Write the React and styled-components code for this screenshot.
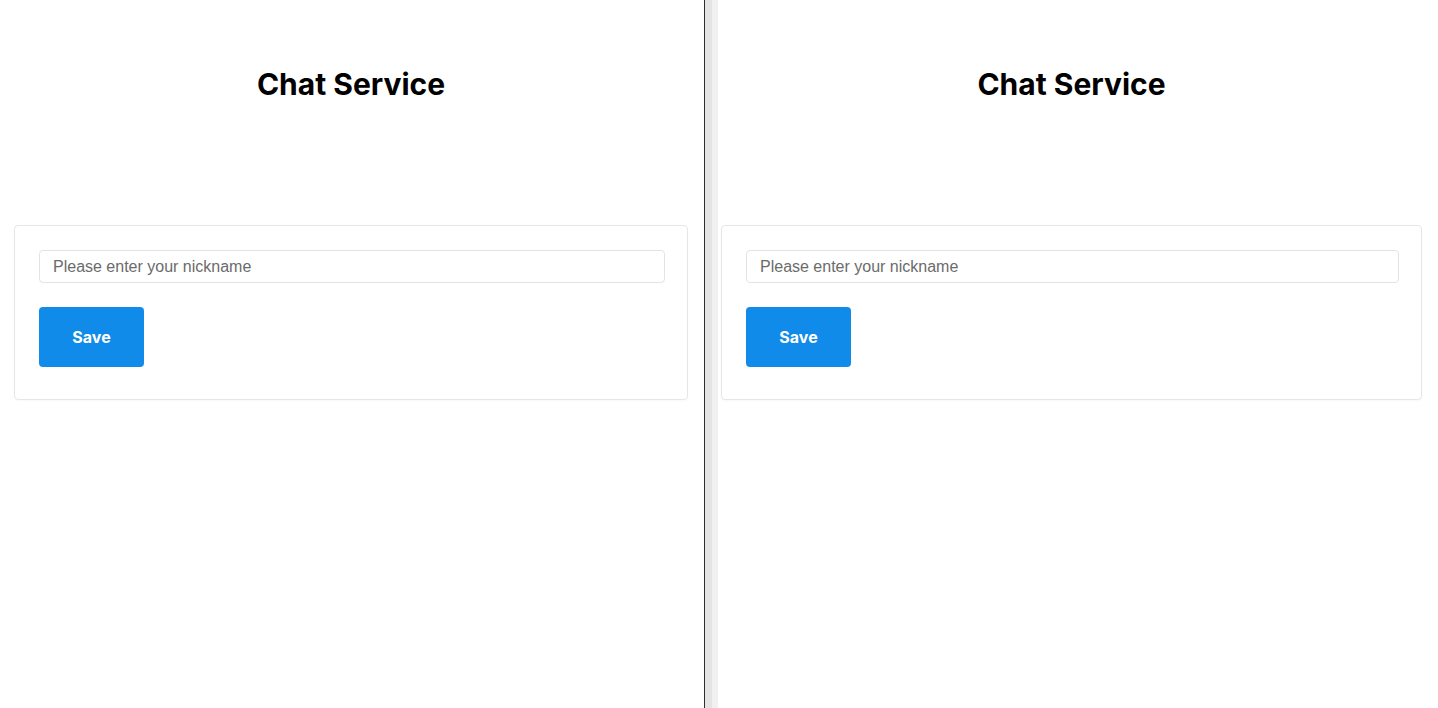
import React, { useState } from "react";
import styled, { createGlobalStyle } from "styled-components";

const GlobalStyle = createGlobalStyle`
  html, body {
    margin: 0;
    padding: 0;
    background: #ffffff;
  }
  body {
    font-family: Inter, "Liberation Sans", sans-serif;
  }
`;

const StScreen = styled.div`
  display: flex;
  width: 1438px;
  height: 708px;
  overflow: hidden;
`;

const StPane = styled.div`
  position: relative;
  display: flex;
  flex-direction: column;
  box-sizing: border-box;
  width: ${(props) => props.width}px;
  padding: 66px 16px 0 ${(props) => props.left}px;
  background: #ffffff;
`;

const StDivider = styled.div`
  width: 1px;
  background: #2f2f2f;
`;

// window edge of the second browser laid over the pane
const StEdge = styled.div`
  position: absolute;
  top: 0;
  left: 0;
  bottom: 0;
  width: 13px;
  background: linear-gradient(to right, #e4e4e4 0, #e4e4e4 7px, #f1f1f1 7px);
`;

const StTitle = styled.h1`
  margin: 0 0 123px;
  font-family: Inter, "Liberation Sans", sans-serif;
  font-size: 30px;
  line-height: 36px;
  font-weight: 700;
  color: #000000;
  text-align: center;
`;

const StCard = styled.div`
  display: flex;
  flex-direction: column;
  align-items: flex-start;
  gap: 24px;
  padding: 24px 22px 32px 24px;
  border: 1px solid #e6e6e6;
  border-radius: 4px;
  box-shadow: 0 1px 2px rgba(0, 0, 0, 0.03);
`;

const StInput = styled.input`
  box-sizing: border-box;
  width: 100%;
  height: 33px;
  padding: 0 13px;
  border: 1px solid #e3e3e3;
  border-radius: 4px;
  font-family: "Liberation Sans", Arial, sans-serif;
  font-size: 16px;
  color: #222222;
  outline: none;

  &::placeholder {
    color: #6b6b6b;
  }
`;

const StBtn = styled.button`
  width: 105px;
  height: 60px;
  border: none;
  border-radius: 4px;
  background-color: #118be9;
  color: #ffffff;
  font-family: Inter, "Liberation Sans", sans-serif;
  font-size: 16px;
  font-weight: 700;
  cursor: pointer;
`;

function NicknameForm() {
  const [nickname, setNickname] = useState("");

  const onChangeHandler = (e) => {
    setNickname(e.target.value);
  };

  return (
    <StCard>
      <StInput
        type="text"
        placeholder="Please enter your nickname"
        value={nickname}
        onChange={onChangeHandler}
      />
      <StBtn>Save</StBtn>
    </StCard>
  );
}

function App() {
  return (
    <>
      <GlobalStyle />
      <StScreen>
        <StPane width={704} left={14}>
          <StTitle>Chat Service</StTitle>
          <NicknameForm />
        </StPane>
        <StDivider />
        <StPane width={733} left={16}>
          <StEdge />
          <StTitle>Chat Service</StTitle>
          <NicknameForm />
        </StPane>
      </StScreen>
    </>
  );
}

export default App;
